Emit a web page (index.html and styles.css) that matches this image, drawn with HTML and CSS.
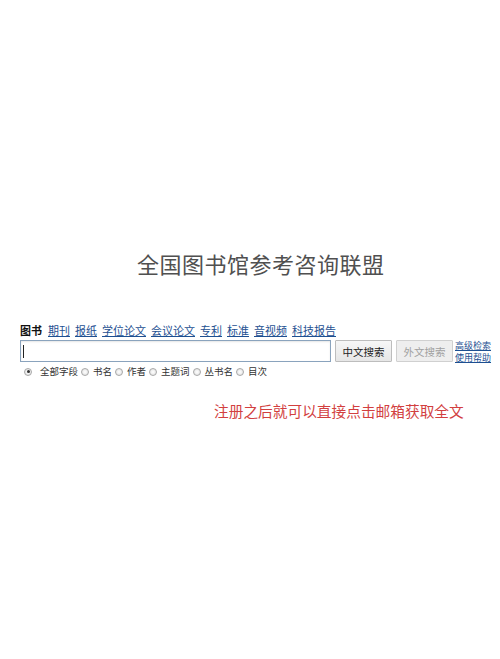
FILE: index.html
```html
<!DOCTYPE html>
<html lang="zh">
<head>
<meta charset="utf-8">
<link rel="stylesheet" href="styles.css">
</head>
<body>
<div class="page">
  <h1 class="title">全国图书馆参考咨询联盟</h1>
  <div class="search">
    <div class="tabs">
      <span class="tab active">图书</span>
      <a class="tab" href="#">期刊</a>
      <a class="tab" href="#">报纸</a>
      <a class="tab" href="#">学位论文</a>
      <a class="tab" href="#">会议论文</a>
      <a class="tab" href="#">专利</a>
      <a class="tab" href="#">标准</a>
      <a class="tab" href="#">音视频</a>
      <a class="tab" href="#">科技报告</a>
    </div>
    <div class="bar">
      <div class="input"><span class="caret"></span></div>
      <button class="btn">中文搜索</button>
      <button class="btn disabled">外文搜索</button>
      <div class="links">
        <a href="#">高级检索</a>
        <a href="#">使用帮助</a>
      </div>
    </div>
    <div class="radios">
      <label class="radio first"><span class="dot checked"></span>全部字段</label>
      <label class="radio"><span class="dot"></span>书名</label>
      <label class="radio"><span class="dot"></span>作者</label>
      <label class="radio"><span class="dot"></span>主题词</label>
      <label class="radio"><span class="dot"></span>丛书名</label>
      <label class="radio"><span class="dot"></span>目次</label>
    </div>
  </div>
  <p class="note">注册之后就可以直接点击邮箱获取全文</p>
</div>
</body>
</html>
```
FILE: styles.css
```css
html, body {
  margin: 0;
  padding: 0;
  background: #fff;
}
body {
  font-family: "Noto Sans CJK SC", "Noto Sans", sans-serif;
  width: 500px;
  height: 659px;
  overflow: hidden;
}
.page {
  padding-top: 248px;
}
.title {
  margin: 0 0 0 137px;
  font-size: 22px;
  line-height: 30px;
  font-weight: 400;
  color: #505050;
  letter-spacing: 0.5px;
}
.search {
  margin: 45px 0 0 20px;
}
.tabs {
  display: flex;
  gap: 5px;
  font-size: 11px;
  line-height: 14px;
}
.tab {
  color: #1d4f91;
  text-decoration: underline;
}
.tab.active {
  color: #111;
  font-weight: 700;
  text-decoration: none;
  margin-right: 1px;
}
.bar {
  display: flex;
  align-items: flex-start;
  margin-top: 3px;
}
.input {
  width: 307px;
  height: 20px;
  border: 1px solid #8aa3bd;
  box-shadow: inset 0 1px 2px rgba(0,0,0,0.1);
  display: flex;
  align-items: center;
  padding-left: 2px;
}
.caret {
  width: 1px;
  height: 13px;
  background: #222;
}
.btn {
  margin-left: 4px;
  width: 57px;
  height: 22px;
  border: 1px solid #bdbdbd;
  background: linear-gradient(#f7f7f7, #e6e6e6);
  font-family: inherit;
  font-size: 10.5px;
  color: #222;
  padding: 0;
  border-radius: 1px;
}
.btn.disabled {
  color: #a0a0a0;
  background: #eeeeee;
  border-color: #d0d0d0;
}
.links {
  display: flex;
  flex-direction: column;
  margin-left: 2px;
  font-size: 9px;
  line-height: 12px;
}
.links a {
  color: #1d4f91;
  text-decoration: underline;
}
.radios {
  display: flex;
  gap: 3px;
  margin-top: 1px;
  margin-left: 4px;
  font-size: 9.5px;
  line-height: 13px;
  color: #333;
}
.radio {
  display: flex;
  align-items: center;
}
.dot {
  width: 8px;
  height: 8px;
  border-radius: 50%;
  border: 1px solid #a8a8a8;
  background: radial-gradient(#fff, #ddd);
  box-sizing: border-box;
  margin-right: 4px;
  position: relative;
}
.radio.first .dot {
  margin-right: 8px;
}
.dot.checked::after {
  content: "";
  position: absolute;
  left: 1.5px;
  top: 1.5px;
  width: 3px;
  height: 3px;
  border-radius: 50%;
  background: #333;
}
.note {
  margin: 23px 0 0 214px;
  font-size: 14.7px;
  line-height: 20px;
  color: #d23f3f;
}
```
